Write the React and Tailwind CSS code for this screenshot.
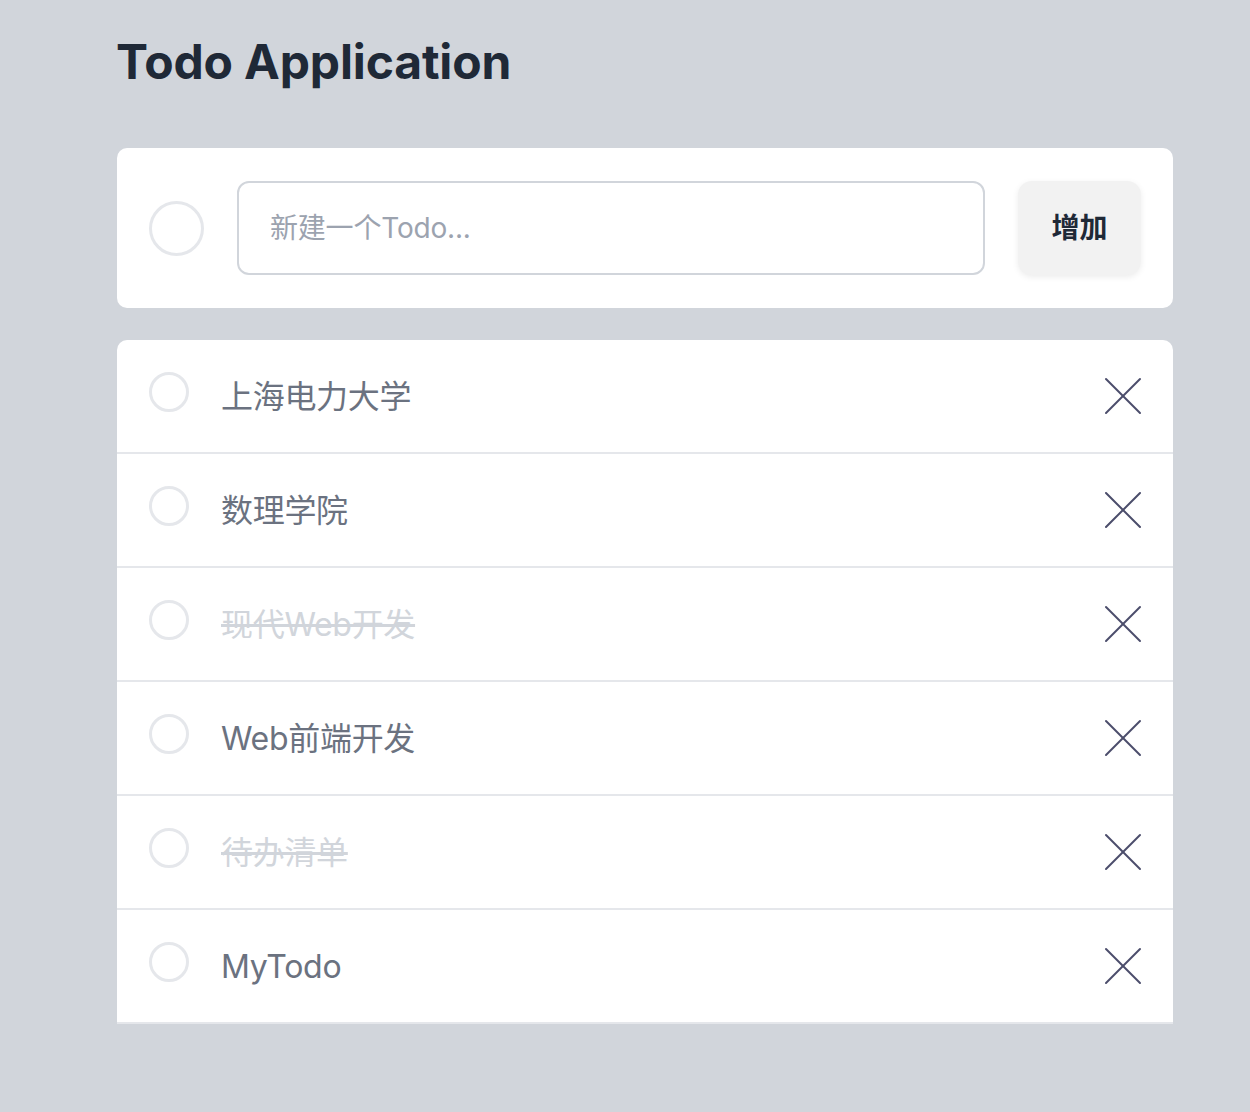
import React, { useState } from 'react';

const initialTodos = [
    { id: 1, text: '上海电力大学', done: false },
    { id: 2, text: '数理学院', done: false },
    { id: 3, text: '现代Web开发', done: true },
    { id: 4, text: 'Web前端开发', done: false },
    { id: 5, text: '待办清单', done: true },
    { id: 6, text: 'MyTodo', done: false },
];

const font = { fontFamily: 'Inter, "Noto Sans CJK SC", sans-serif' };

function XIcon() {
    return (
        <svg width="38" height="38" viewBox="0 0 38 38" fill="none" stroke="currentColor" strokeWidth="2" strokeLinecap="round">
            <path d="M2 2 L36 36" />
            <path d="M36 2 L2 36" />
        </svg>
    );
}

export default function App() {
    const [todos, setTodos] = useState(initialTodos);
    const [draft, setDraft] = useState('');

    const addTodo = () => {
        if (!draft.trim()) return;
        setTodos([...todos, { id: Date.now(), text: draft.trim(), done: false }]);
        setDraft('');
    };

    return (
        <div className="min-h-[1112px] bg-[#d1d5db] font-['Inter','Noto_Sans_CJK_SC',sans-serif]">
            <div className="w-[1056px] ml-[117px] pt-[30px]">
                <h1 className="text-[48px] leading-[64px] font-bold text-[#1f2937] tracking-[-0.15px] -ml-px">
                    Todo Application
                </h1>

                <div className="mt-[54px] bg-white rounded-[10px] px-[32px] py-[33px] flex items-center">
                    <div className="w-[55px] h-[55px] rounded-full border-[3px] border-[#e5e7eb] shrink-0"></div>
                    <input
                        value={draft}
                        onChange={(e) => setDraft(e.target.value)}
                        placeholder="新建一个Todo..."
                        className="ml-[33px] w-[748px] h-[94px] rounded-[12px] border-2 border-[#d1d5db] px-[31px] text-[28px] tracking-[-0.2px] text-gray-700 placeholder:text-[#9ca3af] outline-none"
                        style={font}
                    />
                    <button
                        onClick={addTodo}
                        className="ml-auto w-[123px] h-[94px] rounded-[14px] bg-[#f2f2f2] shadow-[0_2px_6px_rgba(0,0,0,0.08)] text-[28px] font-bold text-[#1f2937]"
                        style={font}
                    >
                        增加
                    </button>
                </div>

                <ul className="mt-[32px] bg-white rounded-t-[10px]">
                    {todos.map((todo) => (
                        <li key={todo.id} className="h-[114px] border-b-2 border-[#e5e7eb] flex items-center pl-[32px] pr-[32px]">
                            <button
                                onClick={() => setTodos(todos.map((t) => (t.id === todo.id ? { ...t, done: !t.done } : t)))}
                                className="w-[40px] h-[40px] rounded-full border-[3px] border-[#e5e7eb] shrink-0 -mt-[8px]"
                            ></button>
                            <span
                                className={
                                    todo.done
                                        ? 'ml-[32px] mt-[2px] text-[32px] tracking-[-0.3px] text-[#d1d5db] line-through'
                                        : 'ml-[32px] mt-[2px] text-[32px] tracking-[-0.3px] text-[#6b7280]'
                                }
                            >
                                {todo.text}
                            </span>
                            <button
                                onClick={() => setTodos(todos.filter((t) => t.id !== todo.id))}
                                className="ml-auto text-[#4b4d6b] -mr-[1px] mt-0"
                            >
                                <XIcon />
                            </button>
                        </li>
                    ))}
                </ul>
            </div>
        </div>
    );
}
